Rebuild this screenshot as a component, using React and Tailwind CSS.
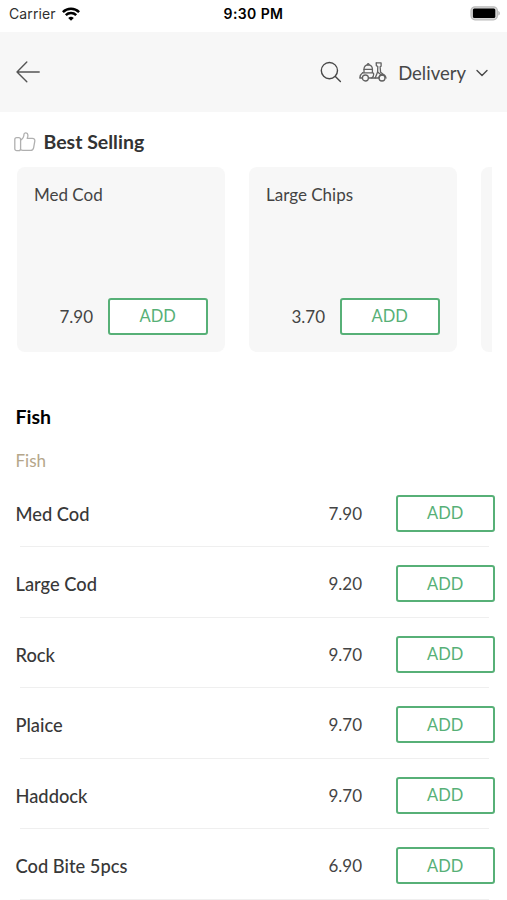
import React from 'react';

const bestSelling = [
    { name: 'Med Cod', price: '7.90' },
    { name: 'Large Chips', price: '3.70' }
];

const fishItems = [
    { name: 'Med Cod', price: '7.90' },
    { name: 'Large Cod', price: '9.20' },
    { name: 'Rock', price: '9.70' },
    { name: 'Plaice', price: '9.70' },
    { name: 'Haddock', price: '9.70' },
    { name: 'Cod Bite 5pcs', price: '6.90' }
];

const WifiIcon = () => (
    <svg width="18" height="14" viewBox="0 0 18 14" fill="none" stroke="#000" strokeWidth="2.5">
        <path d="M0.9 5.1a11.5 11.5 0 0 1 16.2 0" />
        <path d="M3.8 8.2a7.4 7.4 0 0 1 10.4 0" />
        <path d="M9 13.8 6.2 11a4 4 0 0 1 5.6 0Z" fill="#000" stroke="none" />
    </svg>
);

const BatteryIcon = () => (
    <svg width="30" height="15" viewBox="0 0 30 15">
        <rect x="1" y="0.8" width="26.4" height="13" rx="4" fill="#d8d8d8" stroke="#bcbcbc" strokeWidth="1.2" />
        <rect x="2.9" y="2.5" width="22.4" height="9.6" rx="1.5" fill="#000" />
        <path d="M28.4 5v4.6c1.8-.7 1.8-3.9 0-4.6Z" fill="#a9a9a9" />
    </svg>
);

const BackIcon = () => (
    <svg width="24" height="22" viewBox="0 0 24 22" fill="none" stroke="#555" strokeWidth="1.4" strokeLinecap="round" strokeLinejoin="round">
        <path d="M23.2 11H1M10.8 1 1 11l9.8 9.8" />
    </svg>
);

const SearchIcon = () => (
    <svg width="22" height="22" viewBox="0 0 22 22" fill="none" stroke="#484848" strokeWidth="1.4" strokeLinecap="round">
        <circle cx="9.4" cy="9.6" r="8.1" />
        <path d="m15.4 15.4 5 5" />
    </svg>
);

const ScooterIcon = () => (
    <svg width="28" height="20" viewBox="0 0 28 20" fill="none" stroke="#626262" strokeWidth="1.3" strokeLinecap="round" strokeLinejoin="round">
        <path d="M5 10.6V7Q5.2 2.9 9.2 2.8q4 .1 4.2 4.2v3.6" />
        <path d="M8.2 2.7q1-2 2 0M5 7.4h8.4" />
        <path d="M3.6 10.8h10.2q.9.1.9 1.2.1 2.6-1.9 4H9.6" />
        <path d="M3.6 10.8C1.6 12.2.9 13.8.8 16h2.5" />
        <circle cx="6.4" cy="16" r="3" />
        <path d="M17.3.9h4.8v3.3l-1 .6.5 5.4 3.2 2.6" />
        <path d="M17.3.9v2.7l1.5.9-.2 5.6-2.4 5.9h-3.4" />
        <path d="M16.2 16H20q.4-3.2 3.6-3.4 2.8.2 3.4 3.4" />
        <path d="m18.6 10 3.4 2.8" />
        <circle cx="23" cy="16" r="3" />
    </svg>
);

const ChevronIcon = () => (
    <svg width="12" height="8" viewBox="0 0 12 8" fill="none" stroke="#484848" strokeWidth="1.4" strokeLinecap="round" strokeLinejoin="round">
        <path d="M1 1.5 6 6.5l5-5" />
    </svg>
);

const ThumbIcon = () => (
    <svg width="22" height="20" viewBox="0 0 22 20" fill="none" stroke="#b0b0b0" strokeWidth="1.3" strokeLinecap="round" strokeLinejoin="round">
        <rect x="0.8" y="5.7" width="5.8" height="13" rx="1.9" />
        <path d="M6.6 8.1C9 6.8 9.9 5 10 2.3c.1-2 3.7-2.2 3.9.8.1 1.2-.2 2.2-.7 3.2h5.1c1.9 0 2.8 1.2 2.5 2.9l-1.2 6.6c-.4 1.8-1.3 2.6-2.9 2.6H8.9q-1.4 0-2.4-.9" />
    </svg>
);

const AddButton = () => (
    <button className="h-[37px] w-[99.5px] shrink-0 rounded-[3px] border-2 border-[#57b077] bg-white pt-px text-[16.5px] leading-none text-[#57b077]">
        ADD
    </button>
);

const ProductCard = ({ item }) => (
    <div className="flex h-[185px] w-[208px] shrink-0 flex-col justify-between rounded-lg bg-[#f7f7f7] pt-4 pr-[17px] pb-[17.5px] pl-[17.5px]">
        <h3 className="text-[17px] leading-6 text-[#444]">{item.name}</h3>
        <div className="flex items-center justify-end gap-[15px]">
            <span className="pt-px text-[17px] text-[#444]">{item.price}</span>
            <AddButton />
        </div>
    </div>
);

const MenuRow = ({ item }) => (
    <li className="relative flex h-[70.5px] items-start pt-[18px] pr-3 pl-[15.5px]">
        <span className="flex-1 text-[18.3px] leading-[38px] font-medium text-[#383838]">{item.name}</span>
        <span className="mr-[33.5px] text-[17px] leading-[38px] text-[#444]">{item.price}</span>
        <AddButton />
        <span className="absolute right-[18px] bottom-0 left-5 h-px bg-[#efefef]" />
    </li>
);

const App = () => {
    return (
        <div className="h-[900px] w-full overflow-hidden bg-white font-['Lato',sans-serif]">
            <div className="grid h-8 grid-cols-3 items-start px-[7px] pt-1.5 font-['Inter',sans-serif] text-black">
                <div className="flex items-center gap-1.5 pl-0.5">
                    <span className="text-[14px] leading-4 tracking-[0.1px] text-[#303030]">Carrier</span>
                    <WifiIcon />
                </div>
                <span className="text-center text-[14px] leading-4 font-semibold tracking-[0.4px]">9:30 PM</span>
                <div className="flex justify-end">
                    <BatteryIcon />
                </div>
            </div>

            <header className="flex h-20 items-center bg-[#f7f7f7] pr-[19px] pl-4">
                <BackIcon />
                <div className="ml-auto flex items-center">
                    <SearchIcon />
                    <div className="ml-[17px] flex items-center">
                        <ScooterIcon />
                        <span className="ml-[11px] pt-0.5 text-[18.5px] leading-6 text-[#484848]">Delivery</span>
                        <span className="ml-2.5 pt-0.5">
                            <ChevronIcon />
                        </span>
                    </div>
                </div>
            </header>

            <section className="pt-[18px]">
                <div className="flex items-center gap-2 pl-[13.5px]">
                    <ThumbIcon />
                    <h2 className="text-[19.5px] leading-6 font-bold text-[#333]">Best Selling</h2>
                </div>
                <div className="mt-[13px] mr-[15px] ml-[16.5px] flex gap-6 overflow-hidden">
                    {bestSelling.map((item) => (
                        <ProductCard key={item.name} item={item} />
                    ))}
                    <div className="h-[185px] w-[208px] shrink-0 rounded-lg bg-[#f7f7f7]" />
                </div>
            </section>

            <section className="pt-[52.5px]">
                <h2 className="pl-[15.5px] text-[19.5px] leading-6 font-bold text-black">Fish</h2>
                <p className="mt-5 pl-[15.5px] text-[17px] leading-6 text-[#b5a68a]">Fish</p>
                <ul className="mt-1">
                    {fishItems.map((item) => (
                        <MenuRow key={item.name} item={item} />
                    ))}
                </ul>
            </section>
        </div>
    );
};

export default App;
